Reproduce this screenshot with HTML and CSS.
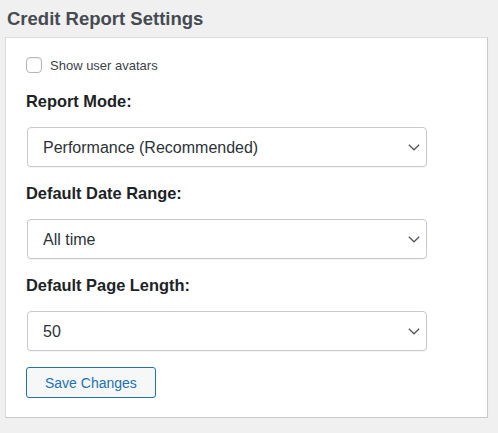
FILE: index.html
```html
<!DOCTYPE html>
<html lang="en">
<head>
  <meta charset="UTF-8">
  <title>Credit Report Settings</title>
  <meta name="viewport" content="width=device-width, initial-scale=1.0">
  <link rel="stylesheet" href="styles.css">
</head>
<body>
  <div class="wrap">
    <h2 class="page-title">Credit Report Settings</h2>

    <form class="settings-card">
      <label class="check-row">
        <input type="checkbox" id="showAvatars">
        <span>Show user avatars</span>
      </label>

      <div class="field">
        <label for="reportMode">Report Mode:</label>
        <span class="select-wrap">
          <select id="reportMode">
            <option>Performance (Recommended)</option>
            <option>Detailed</option>
          </select>
          <svg class="chevron" viewBox="0 0 12 7" width="12" height="7"><path d="M0.8 0.8 L6 5.8 L11.2 0.8" fill="none" stroke="#50575e" stroke-width="1.2"/></svg>
        </span>
      </div>

      <div class="field">
        <label for="dateRange">Default Date Range:</label>
        <span class="select-wrap">
          <select id="dateRange">
            <option>All time</option>
            <option>Last 30 days</option>
            <option>Last 7 days</option>
          </select>
          <svg class="chevron" viewBox="0 0 12 7" width="12" height="7"><path d="M0.8 0.8 L6 5.8 L11.2 0.8" fill="none" stroke="#50575e" stroke-width="1.2"/></svg>
        </span>
      </div>

      <div class="field">
        <label for="pageLength">Default Page Length:</label>
        <span class="select-wrap">
          <select id="pageLength">
            <option>10</option>
            <option>25</option>
            <option selected>50</option>
            <option>100</option>
          </select>
          <svg class="chevron" viewBox="0 0 12 7" width="12" height="7"><path d="M0.8 0.8 L6 5.8 L11.2 0.8" fill="none" stroke="#50575e" stroke-width="1.2"/></svg>
        </span>
      </div>

      <button type="button" class="save-btn">Save Changes</button>
    </form>
  </div>
</body>
</html>
```

FILE: styles.css
```css
body {
  margin: 0;
  background: #f0f0f1;
  color: #1d2327;
  font-family: "Liberation Sans", Arial, sans-serif;
}

.wrap {
  padding: 7px 10px 0 5px;
}

.page-title {
  margin: 0 0 6px 2px;
  font-size: 18.5px;
  line-height: 24px;
  font-weight: bold;
  color: #454b51;
}

.settings-card {
  background: #fff;
  border: 1px solid #dcdcde;
  border-right-color: #c9cacc;
  border-bottom-color: #c9cacc;
  box-shadow: 0 1px 1px rgba(0,0,0,0.06);
  padding: 17px 20px 19px 20px;
}

.check-row {
  display: flex;
  align-items: center;
  gap: 8px;
  height: 20px;
  margin-bottom: 16px;
  font-size: 13px;
  color: #3c434a;
  cursor: pointer;
}

.check-row input {
  appearance: none;
  -webkit-appearance: none;
  width: 16px;
  height: 16px;
  margin: 0;
  border: 1px solid #b4b6b9;
  border-radius: 4px;
  background: #fff;
  box-shadow: inset 0 1px 2px rgba(0,0,0,0.08);
}

.field {
  margin-bottom: 16px;
}

.field label {
  display: block;
  font-size: 16.4px;
  line-height: 20px;
  font-weight: bold;
  margin-bottom: 16px;
}

.select-wrap {
  position: relative;
  display: block;
  width: 400px;
  margin-left: 1px;
}

.select-wrap select {
  appearance: none;
  -webkit-appearance: none;
  width: 100%;
  height: 40px;
  margin: 0;
  padding: 0 32px 0 15px;
  font-family: inherit;
  font-size: 16px;
  color: #2c3338;
  background: #fff;
  border: 1px solid #c8c9cc;
  border-radius: 4px;
  box-shadow: 0 1px 1px rgba(0,0,0,0.05);
}

.chevron {
  position: absolute;
  right: 7px;
  top: 17px;
  pointer-events: none;
}

.save-btn {
  display: block;
  height: 31px;
  padding: 0 18px;
  font-family: inherit;
  font-size: 14px;
  color: #2271b1;
  background: #f6f7f7;
  border: 1px solid #2271b1;
  border-radius: 3px;
  cursor: pointer;
}

.save-btn:hover {
  background: #f0f0f1;
  color: #135e96;
  border-color: #0a4b78;
}
```
